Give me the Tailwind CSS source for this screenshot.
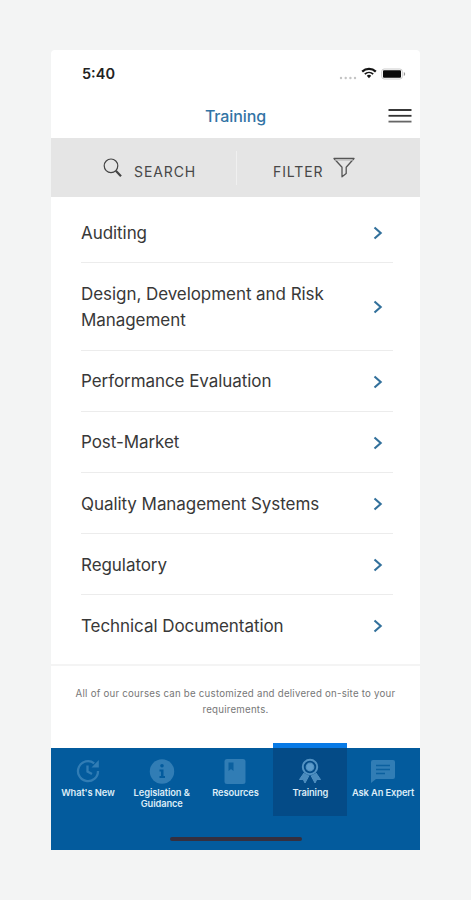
<!DOCTYPE html>
<html lang="en">

<head>
    <meta charset="utf-8" />
    <meta name="viewport" content="width=device-width, initial-scale=1" />
    <title>Training</title>
    <script src="https://cdn.jsdelivr.net/npm/@tailwindcss/browser@4"></script>
</head>

<body class="bg-[#f3f4f4] font-['Inter','Liberation_Sans',sans-serif]">
    <div class="h-[900px] w-[471px] overflow-hidden pl-[51px] pt-[50px]">
        <main class="flex h-[800px] w-[369px] flex-col rounded-t bg-white">
            <!-- Status bar -->
            <div class="flex h-12 shrink-0 items-center justify-between pl-[31px] pr-[14px] text-[#222]">
                <span class="text-[14.5px] font-semibold">5:40</span>
                <div class="flex items-center">
                    <svg class="mt-[7px] h-1 w-[18px]" viewBox="0 0 18 4" fill="#c4c4c4">
                        <circle cx="2" cy="2" r="1.2" />
                        <circle cx="6.7" cy="2" r="1.2" />
                        <circle cx="11.4" cy="2" r="1.2" />
                        <circle cx="16" cy="2" r="1.2" />
                    </svg>
                    <svg class="ml-[4px] mt-[-2px] h-[12px] w-[16px]" viewBox="0 0 16 12" fill="none" stroke="#151515" stroke-width="2.2">
                        <path d="M1.2 4.6C5 .9 11 .9 14.8 4.6" />
                        <path d="M3.8 7.2C6.2 4.9 9.8 4.9 12.2 7.2" stroke-width="1.7" />
                        <path d="M5.8 8.7Q8 7 10.2 8.7L8 11.2Z" fill="#151515" stroke="none" />
                    </svg>
                    <svg class="ml-[4px] mt-[-1px] h-[12px] w-[25px]" viewBox="0 0 25 12">
                        <rect x=".7" y="1" width="20.6" height="10" rx="2.5" fill="#fff" stroke="#ccc" />
                        <rect x="2" y="2.3" width="18" height="7.4" rx="1" fill="#090909" />
                        <path d="M22.8 4v4q1.4-.6 1.4-2t-1.4-2Z" fill="#999" />
                    </svg>
                </div>
            </div>

            <!-- Title -->
            <header class="grid h-10 shrink-0 grid-cols-[1fr_auto_1fr] items-center pr-2">
                <h1 class="col-start-2 mt-[-4px] pl-[8px] text-[16px] font-medium tracking-[-0.1px] text-[#3274a5]">Training</h1>
                <svg class="mt-[-4px] h-4 w-6 justify-self-end" viewBox="0 0 24 16" stroke-width="1.8">
                    <path d="M.5 2H23.5" stroke="#222" />
                    <path d="M.5 7.8H23.5" stroke="#333" />
                    <path d="M.5 13.6H23.5" stroke="#666" />
                </svg>
            </header>

            <!-- Search and filter -->
            <div class="flex h-[59px] shrink-0 items-center bg-[#e5e5e5] text-[14px] text-[#484848]">
                <div class="flex w-[185px] items-center pl-[52px]">
                    <svg class="h-5 w-5" viewBox="0 0 20 20" fill="none" stroke="#444">
                        <circle cx="8" cy="7.8" r="6.8" stroke-width="1.2" />
                        <path d="M12.8 12.7L18 18.2" stroke-width="2.2" />
                    </svg>
                    <span class="ml-[11px] mt-[7px] tracking-[0.9px]">SEARCH</span>
                </div>
                <div class="h-[34px] w-px bg-[#f0f0f0]"></div>
                <div class="flex items-center pl-[36px]">
                    <span class="mt-[7px] tracking-[0.9px]">FILTER</span>
                    <svg class="ml-[10px] h-[21px] w-[22px]" viewBox="0 0 22 21" fill="none" stroke="#555" stroke-width="1.3" stroke-linejoin="round">
                        <path d="M1 1.5H21L13.2 10.3V16.5L9 19.8V10.3Z" />
                        <path d="M2 3H20" stroke="#bbb" />
                    </svg>
                </div>
            </div>

            <!-- Filled in from the topics list below -->
            <ul id="topics" class="h-[469px] shrink-0 border-b-2 border-[#f4f4f4] pl-[30px] pr-[27px] pt-[5.4px] text-[17px] leading-[26.5px] tracking-[-0.06px] text-[#383838]"></ul>

            <p class="h-[82px] shrink-0 pt-[20px] text-center text-[9.7px] leading-4 tracking-[0.23px] text-[#777]">
                All of our courses can be customized and delivered on-site to your<br />requirements.
            </p>

            <!-- Tab bar -->
            <nav class="flex h-[102px] shrink-0 flex-col bg-[#035b9d]">
                <div class="grid h-[68px] grid-cols-5 text-center text-[9.3px] font-semibold leading-[11px] tracking-[-0.1px] text-[#dcecf7]">
                    <a class="flex flex-col items-center pt-[10px]">
                        <svg class="mb-[3px] h-[26px] w-[26px]" viewBox="0 0 26 26" fill="none" stroke="#317db5" stroke-width="2.3">
                            <path d="M19.2 5.3A10 10 0 1 0 23 13" />
                            <path d="M23.8 2V9.5H16.5Z" fill="#317db5" stroke="none" />
                            <path d="M12.5 7.5V13.5L17 16" />
                        </svg>
                        <span class="whitespace-nowrap">What's New</span>
                    </a>
                    <a class="flex flex-col items-center pt-[10px]">
                        <svg class="mb-[3px] h-[26px] w-[26px]" viewBox="0 0 26 26">
                            <circle cx="13" cy="13.5" r="12.2" fill="#317db5" />
                            <circle cx="13" cy="7.7" r="1.8" fill="#035b9d" />
                            <path d="M10.5 11.5H14.5V18H16V20H10.5V18H12V13.5H10.5Z" fill="#035b9d" />
                        </svg>
                        <span class="whitespace-nowrap">Legislation &amp;<br />Guidance</span>
                    </a>
                    <a class="flex flex-col items-center pt-[10px]">
                        <svg class="mb-[3px] h-[26px] w-[26px]" viewBox="0 0 26 26">
                            <rect x="2.5" y="1" width="21" height="25" rx="2.5" fill="#317db5" />
                            <path d="M6.5 4.5H11.5V13L9 11L6.5 13Z" fill="#0b609f" />
                        </svg>
                        <span class="whitespace-nowrap">Resources</span>
                    </a>
                    <a class="ml-px mr-[-1px] mt-[-5px] flex h-[73px] flex-col items-center border-t-[5px] border-[#087ae6] bg-[#044b87] pt-[10px]">
                        <svg class="mb-[3px] h-[26px] w-[26px]" viewBox="0 0 26 26" fill="none" stroke="#5292c3">
                            <path d="M7 15L2.5 21.5L6.2 21.3L8 25L12 17.5M19 15L23.5 21.5L19.8 21.3L18 25L14 17.5" fill="#4a8bbd" />
                            <circle cx="13" cy="9" r="7.2" fill="#044b87" stroke-width="2" />
                            <circle cx="13" cy="9" r="3.8" fill="#5d9ccc" stroke-width="1.2" />
                        </svg>
                        <span class="whitespace-nowrap">Training</span>
                    </a>
                    <a class="flex flex-col items-center pt-[10px]">
                        <svg class="mb-[3px] h-[26px] w-[26px]" viewBox="0 0 26 26">
                            <path d="M3 2H23Q25 2 25 4V19Q25 21 23 21H6L1 25V4Q1 2 3 2Z" fill="#317db5" />
                            <path d="M6 7.5H20M6 11.5H20M6 15.5H15" stroke="#0b609f" stroke-width="1.6" />
                        </svg>
                        <span class="whitespace-nowrap">Ask An Expert</span>
                    </a>
                </div>
                <div class="mx-auto mt-[21px] h-[4px] w-[132px] rounded-full bg-[#352f3e]"></div>
            </nav>
        </main>
    </div>
    <script>
        const topics = [
            { name: "Auditing" },
            { name: "Design, Development and Risk<br />Management" },
            { name: "Performance Evaluation" },
            { name: "Post-Market" },
            { name: "Quality Management Systems" },
            { name: "Regulatory" },
            { name: "Technical Documentation" }
        ];

        const list = document.getElementById("topics");

        for (const topic of topics) {
            list.innerHTML += `
                <li class="flex items-center justify-between border-b border-[#ececec] pb-[16.3px] pt-[17.3px] last:border-b-0">
                    <span class="whitespace-nowrap">${topic.name}</span>
                    <svg class="mr-[10px] h-[14px] w-[10px]" viewBox="0 0 10 14" fill="none" stroke="#32709b" stroke-width="2.1">
                        <path d="M1.5 1.5L7.7 7L1.5 12.5" />
                    </svg>
                </li>
            `;
        }
    </script>
</body>

</html>
